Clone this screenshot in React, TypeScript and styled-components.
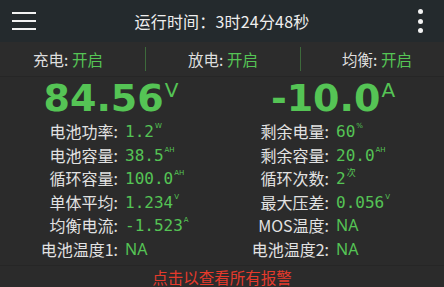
import React from "react";
import styled, { createGlobalStyle } from "styled-components";

const Global = createGlobalStyle`
  html, body { margin: 0; padding: 0; background: #2b2b2b; }
  body { width: 444px; height: 287px; overflow: hidden; font-family: "Noto Sans CJK SC", "Noto Sans", sans-serif; }
`;

const GREEN = "#55c455";

const Screen = styled.div`
  width: 444px;
  height: 287px;
  display: flex;
  flex-direction: column;
  background: #2b2b2b;
`;

const TopBar = styled.div`
  height: 42px;
  background: #242a2d;
  display: grid;
  grid-template-columns: 48px 1fr 48px;
  align-items: center;
`;

const Hamburger = styled.div`
  display: flex;
  flex-direction: column;
  gap: 5.5px;
  padding-left: 12px;
  span {
    display: block;
    width: 24px;
    height: 2.5px;
    background: #f2f2f2;
  }
`;

const Title = styled.div`
  text-align: center;
  color: #eeeeee;
  font-size: 16px;
  line-height: 42px;
  letter-spacing: 0.2px;
`;

const Dots = styled.div`
  display: flex;
  flex-direction: column;
  align-items: center;
  gap: 4.5px;
  span {
    display: block;
    width: 5px;
    height: 5px;
    border-radius: 50%;
    background: #f2f2f2;
  }
`;

const StatusRow = styled.div`
  height: 34px;
  display: grid;
  grid-template-columns: 145px 1px 154px 1px 1fr;
  align-items: center;
  background: #2c2c2c;
  border-bottom: 1px solid #262626;
`;

const StatusItem = styled.div<{ $pl?: number; $pr?: number }>`
  text-align: center;
  font-size: 15.5px;
  color: #dedede;
  padding-left: ${(p) => p.$pl ?? 0}px;
  padding-right: ${(p) => p.$pr ?? 0}px;
  white-space: pre;
  span { color: ${GREEN}; }
`;

const Divider = styled.div`
  width: 1px;
  height: 24px;
  background: #3d6a3b;
`;

const Main = styled.div`
  flex: 1;
  display: grid;
  grid-template-columns: 222px 222px;
  align-content: start;
`;

const Column = styled.div`
  display: flex;
  flex-direction: column;
`;

const BigValue = styled.div<{ $shift: number }>`
  height: 43px;
  display: flex;
  justify-content: center;
  align-items: flex-start;
  padding-left: ${(p) => p.$shift}px;
  color: ${GREEN};
`;

const BigNumber = styled.span`
  font-family: "DejaVu Sans", sans-serif;
  font-weight: bold;
  font-size: 38px;
  line-height: 43px;
`;

const BigUnit = styled.span`
  font-family: "DejaVu Sans", sans-serif;
  font-size: 20px;
  line-height: 20px;
  margin-top: 3px;
  margin-left: 1px;
`;

const Row = styled.div<{ $labelWidth: number }>`
  height: 23.5px;
  display: grid;
  grid-template-columns: ${(p) => p.$labelWidth}px 1fr;
  column-gap: 7px;
`;

const Label = styled.span`
  text-align: right;
  color: #e2e2e2;
  font-size: 16px;
  line-height: 23.5px;
  white-space: nowrap;
`;

const Value = styled.span`
  display: flex;
  align-items: flex-start;
  color: ${GREEN};
  font-family: "DejaVu Sans Mono", monospace;
  font-size: 16px;
  line-height: 23.5px;
`;

const Unit = styled.span`
  font-family: "DejaVu Sans", sans-serif;
  font-size: 7px;
  line-height: 7px;
  margin-top: 3px;
  margin-left: 1px;
`;

const CjkUnit = styled(Unit)`
  font-family: "Noto Sans CJK SC", sans-serif;
  font-size: 9px;
  line-height: 9px;
  margin-top: 1px;
`;

const PlainValue = styled.span`
  color: ${GREEN};
  font-size: 16px;
  line-height: 23.5px;
  font-family: "Noto Sans", sans-serif;
`;

const AlarmBar = styled.div`
  height: 20px;
  border-top: 1px solid #262626;
  display: flex;
  align-items: center;
  justify-content: center;
  color: #e53a2b;
  font-size: 15.5px;
  line-height: 17px;
  padding-top: 1px;
`;

type Item = { label: string; value: string; unit?: string; cjk?: boolean; plain?: boolean };

const left: Item[] = [
  { label: "电池功率:", value: "1.2", unit: "W" },
  { label: "电池容量:", value: "38.5", unit: "AH" },
  { label: "循环容量:", value: "100.0", unit: "AH" },
  { label: "单体平均:", value: "1.234", unit: "V" },
  { label: "均衡电流:", value: "-1.523", unit: "A" },
  { label: "电池温度1:", value: "NA", plain: true },
];

const right: Item[] = [
  { label: "剩余电量:", value: "60", unit: "%" },
  { label: "剩余容量:", value: "20.0", unit: "AH" },
  { label: "循环次数:", value: "2", unit: "次", cjk: true },
  { label: "最大压差:", value: "0.056", unit: "V" },
  { label: "MOS温度:", value: "NA", plain: true },
  { label: "电池温度2:", value: "NA", plain: true },
];

function Rows({ items, labelWidth }: { items: Item[]; labelWidth: number }) {
  return (
    <>
      {items.map((it) => (
        <Row key={it.label} $labelWidth={labelWidth}>
          <Label>{it.label}</Label>
          {it.plain ? (
            <PlainValue>{it.value}</PlainValue>
          ) : (
            <Value>
              {it.value}
              {it.unit && (it.cjk ? <CjkUnit>{it.unit}</CjkUnit> : <Unit>{it.unit}</Unit>)}
            </Value>
          )}
        </Row>
      ))}
    </>
  );
}

export default function App() {
  return (
    <Screen>
      <Global />
      <TopBar>
        <Hamburger>
          <span />
          <span />
          <span />
        </Hamburger>
        <Title>运行时间：3时24分48秒</Title>
        <Dots>
          <span />
          <span />
          <span />
        </Dots>
      </TopBar>
      <StatusRow>
        <StatusItem $pr={9}>
          充电: <span>开启</span>
        </StatusItem>
        <Divider />
        <StatusItem>
          放电: <span>开启</span>
        </StatusItem>
        <Divider />
        <StatusItem $pl={9}>
          均衡: <span>开启</span>
        </StatusItem>
      </StatusRow>
      <Main>
        <Column>
          <BigValue $shift={-12}>
            <BigNumber>84.56</BigNumber>
            <BigUnit>V</BigUnit>
          </BigValue>
          <Rows items={left} labelWidth={118} />
        </Column>
        <Column>
          <BigValue $shift={-8}>
            <BigNumber>-10.0</BigNumber>
            <BigUnit>A</BigUnit>
          </BigValue>
          <Rows items={right} labelWidth={107} />
        </Column>
      </Main>
      <AlarmBar>点击以查看所有报警</AlarmBar>
    </Screen>
  );
}
